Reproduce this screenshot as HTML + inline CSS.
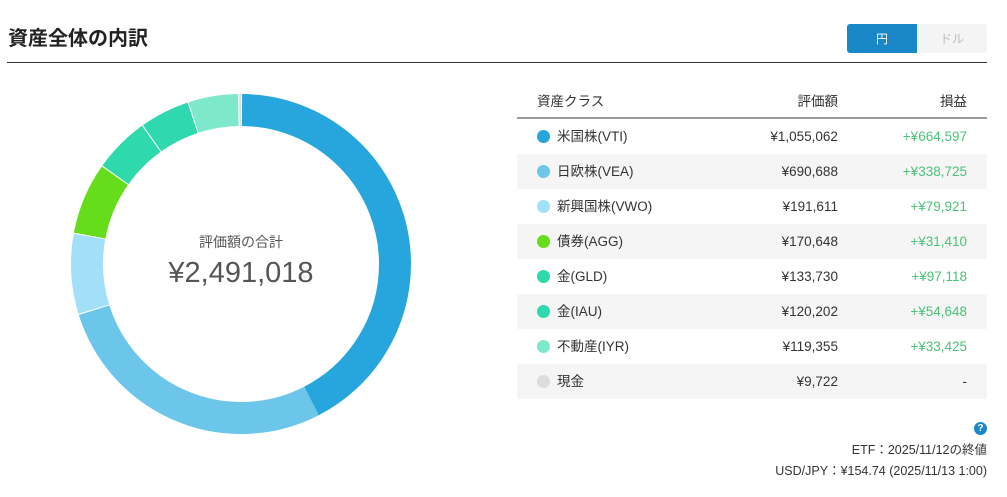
<!DOCTYPE html>
<html><head><meta charset="utf-8"><style>
body{margin:0;background:#fff;font-family:"Liberation Sans","Noto Sans CJK JP",sans-serif;color:#333;width:1007px;height:497px;position:relative;overflow:hidden}
h1{position:absolute;left:8px;top:22px;margin:0;font-size:20px;font-weight:bold;color:#222}
.hr{position:absolute;left:7px;top:62px;width:980px;height:1px;background:#333}
.tog{position:absolute;left:847px;top:24px;width:140px;height:29px;display:flex;font-size:12px}
.tog div{flex:1;display:flex;align-items:center;justify-content:center}
.y{background:#1a87c9;color:#fff;border-radius:3px 0 0 3px}
.d{background:#f4f4f4;color:#bbb;border-radius:0 3px 3px 0}
table{position:absolute;left:517px;top:83px;width:470px;border-collapse:collapse;font-size:13.5px}
th{font-weight:normal;height:34px;border-bottom:2px solid #999;text-align:right;padding:0 20px;color:#333;vertical-align:middle}
th:first-child{text-align:left}
td{height:35px;padding:0 20px;text-align:right;color:#333;vertical-align:middle;line-height:16px}
td:first-child{text-align:left}
tr th:nth-child(2),tr td:nth-child(2){padding-right:13px}
tr:nth-child(odd) td{background:#f5f5f5}
td.g{color:#4cc27a}
.dot{display:inline-block;width:13px;height:13px;border-radius:50%;vertical-align:-2px;margin-right:7px}
.center{position:absolute;left:141px;top:232px;width:200px;text-align:center;color:#555}
.foot{position:absolute;right:20px;font-size:12.5px;color:#333}
</style></head><body>
<h1>資産全体の内訳</h1>
<div class="tog"><div class="y">円</div><div class="d">ドル</div></div>
<div class="hr"></div>
<svg style="position:absolute;left:0;top:0" width="500" height="497">
<g transform="rotate(-90 241 264)" fill="none" stroke-width="32">
<circle cx="241" cy="264" r="154" stroke="#27a5dd" stroke-dasharray="409.5 1000" stroke-dashoffset="-1"/>
<circle cx="241" cy="264" r="154" stroke="#6bc6ea" stroke-dasharray="268 1000" stroke-dashoffset="-410.5"/>
<circle cx="241" cy="264" r="154" stroke="#a2dff8" stroke-dasharray="73.5 1000" stroke-dashoffset="-679.5"/>
<circle cx="241" cy="264" r="154" stroke="#66dd1a" stroke-dasharray="65.5 1000" stroke-dashoffset="-754"/>
<circle cx="241" cy="264" r="154" stroke="#2ed9ab" stroke-dasharray="51 1000" stroke-dashoffset="-820.5"/>
<circle cx="241" cy="264" r="154" stroke="#2fd8ae" stroke-dasharray="45.5 1000" stroke-dashoffset="-872.5"/>
<circle cx="241" cy="264" r="154" stroke="#7de8cb" stroke-dasharray="45.5 1000" stroke-dashoffset="-919"/>
<circle cx="241" cy="264" r="154" stroke="#ddd" stroke-dasharray="2.5 1000" stroke-dashoffset="-965.5"/>
</g></svg>
<div class="center"><div style="font-size:14px">評価額の合計</div><div style="font-size:29px;margin-top:5px">¥2,491,018</div></div>
<table>
<tr><th>資産クラス</th><th>評価額</th><th>損益</th></tr>
<tr><td><span class="dot" style="background:#27a5dd"></span>米国株(VTI)</td><td>¥1,055,062</td><td class="g">+¥664,597</td></tr>
<tr><td><span class="dot" style="background:#6bc6ea"></span>日欧株(VEA)</td><td>¥690,688</td><td class="g">+¥338,725</td></tr>
<tr><td><span class="dot" style="background:#a2dff8"></span>新興国株(VWO)</td><td>¥191,611</td><td class="g">+¥79,921</td></tr>
<tr><td><span class="dot" style="background:#66dd1a"></span>債券(AGG)</td><td>¥170,648</td><td class="g">+¥31,410</td></tr>
<tr><td><span class="dot" style="background:#2ed9ab"></span>金(GLD)</td><td>¥133,730</td><td class="g">+¥97,118</td></tr>
<tr><td><span class="dot" style="background:#2fd8ae"></span>金(IAU)</td><td>¥120,202</td><td class="g">+¥54,648</td></tr>
<tr><td><span class="dot" style="background:#7de8cb"></span>不動産(IYR)</td><td>¥119,355</td><td class="g">+¥33,425</td></tr>
<tr><td><span class="dot" style="background:#ddd"></span>現金</td><td>¥9,722</td><td>-</td></tr>
</table>
<div style="position:absolute;left:974px;top:422px;width:13px;height:13px;border-radius:50%;background:#1a87c9;color:#fff;font-size:10px;font-weight:bold;text-align:center;line-height:13px">?</div>
<div class="foot" style="top:439px">ETF：2025/11/12の終値</div>
<div class="foot" style="top:460px">USD/JPY：¥154.74 (2025/11/13 1:00)</div>
</body></html>
